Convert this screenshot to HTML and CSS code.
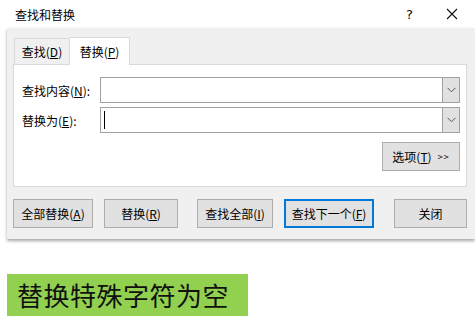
FILE: index.html
```html
<!DOCTYPE html>
<html lang="zh-CN">

<head>
    <meta charset="UTF-8">
    <meta name="viewport" content="width=device-width, initial-scale=1.0">
    <title>查找和替换</title>
    <link rel="stylesheet" href="styles.css">
</head>

<body>
    <div class="titlebar">
        <span class="title">查找和替换</span>
        <span class="help">?</span>
        <svg class="close" width="12" height="12" viewBox="0 0 12 12">
            <path d="M1 1L11 11M11 1L1 11" stroke="#111" stroke-width="1.1" fill="none" />
        </svg>
    </div>

    <div class="dialog">
        <div class="tabs">
            <span class="tab">查找(<u>D</u>)</span>
            <span class="tab active">替换(<u>P</u>)</span>
        </div>
        <div class="panel">
            <div class="row">
                <label class="label">查找内容(<u>N</u>):</label>
                <div class="combo">
                    <div class="field"></div>
                    <div class="arrow">
                        <svg width="9" height="6" viewBox="0 0 9 6"><path d="M0.5 0.8L4.5 4.8L8.5 0.8" stroke="#555" stroke-width="1" fill="none" /></svg>
                    </div>
                </div>
            </div>
            <div class="row">
                <label class="label">替换为(<u>E</u>):</label>
                <div class="combo">
                    <div class="field"><span class="caret"></span></div>
                    <div class="arrow">
                        <svg width="9" height="6" viewBox="0 0 9 6"><path d="M0.5 0.8L4.5 4.8L8.5 0.8" stroke="#555" stroke-width="1" fill="none" /></svg>
                    </div>
                </div>
            </div>
            <div class="options">
                <button class="btn btn-options">选项(<u>T</u>) <span class="more">&gt;&gt;</span></button>
            </div>
        </div>
        <div class="buttons">
            <button class="btn b1">全部替换(<u>A</u>)</button>
            <button class="btn b2">替换(<u>R</u>)</button>
            <button class="btn b3">查找全部(<u>I</u>)</button>
            <button class="btn b4 focus">查找下一个(<u>F</u>)</button>
            <button class="btn b5">关闭</button>
        </div>
    </div>

    <div class="tag">替换特殊字符为空</div>
</body>

</html>
```

FILE: styles.css
```css
* {
    box-sizing: border-box;
}

body {
    margin: 0;
    background: #fff;
    font-family: "Noto Sans CJK SC", "Microsoft YaHei", sans-serif;
    font-size: 12px;
    color: #000;
}

u {
    text-decoration: underline;
    text-underline-offset: 1px;
}

.titlebar {
    height: 28px;
    display: flex;
    align-items: center;
    padding-left: 15px;
}

.title {
    font-size: 12px;
    flex: 1;
}

.help {
    font-family: "DejaVu Sans", sans-serif;
    font-size: 13px;
    margin-right: 33px;
}

.close {
    margin-right: 17px;
}

.dialog {
    margin-left: 7px;
    height: 211px;
    background: #f0f0f0;
    padding: 9px 8px 0 6px;
    box-shadow: 0 2px 3px rgba(0, 0, 0, .35);
}

.tabs {
    display: flex;
    padding-left: 1px;
    height: 27px;
    align-items: flex-end;
}

.tab {
    height: 26px;
    padding: 0;
    width: 56px;
    white-space: nowrap;
    display: flex;
    align-items: center;
    justify-content: center;
    border: 1px solid #d9d9d9;
    border-bottom: none;
    background: #f0f0f0;
}

.tab.active {
    width: 60px;
    height: 28px;
    margin-bottom: -1px;
    background: #fff;
    border-left: none;
    position: relative;
    z-index: 1;
}

.panel {
    background: #fff;
    border: 1px solid #d9d9d9;
    height: 123px;
    padding: 12px 6px 0 8px;
}

.row {
    display: flex;
    align-items: center;
    height: 26px;
    margin-bottom: 4px;
}

.label {
    width: 78px;
}

.combo {
    flex: 1;
    display: flex;
    height: 26px;
    border: 1px solid #a0a0a0;
}

.field {
    flex: 1;
    background: #fff;
    display: flex;
    align-items: center;
    padding-left: 3px;
}

.caret {
    width: 1px;
    height: 18px;
    background: #000;
}

.arrow {
    width: 17px;
    background: #e1e1e1;
    border-left: 1px solid #a0a0a0;
    display: flex;
    align-items: center;
    justify-content: center;
}

.options {
    display: flex;
    justify-content: flex-end;
    margin-top: 9px;
}

.btn {
    font-family: inherit;
    font-size: 12px;
    color: #000;
    background: #e1e1e1;
    border: 1px solid #adadad;
    height: 29px;
    padding: 0;
    display: flex;
    align-items: center;
    justify-content: center;
}

.btn-options {
    width: 78px;
}

.more {
    font-size: 9px;
    letter-spacing: 1px;
    margin-left: 6px;
}

.buttons {
    display: flex;
    margin-top: 12px;
}

.b1 {
    width: 80px;
}

.b2 {
    width: 74px;
    margin-left: 11px;
}

.b3 {
    width: 76px;
    margin-left: 19px;
}

.b4 {
    width: 90px;
    margin-left: 11px;
}

.b5 {
    width: 73px;
    margin-left: 20px;
}

.focus {
    border: 2px solid #0078d7;
}

.tag {
    margin: 35px 0 0 7px;
    width: 241px;
    height: 42px;
    background: #92d050;
    font-size: 26px;
    line-height: 42px;
    padding-left: 10px;
    letter-spacing: 0.5px;
    color: #111;
}
```
